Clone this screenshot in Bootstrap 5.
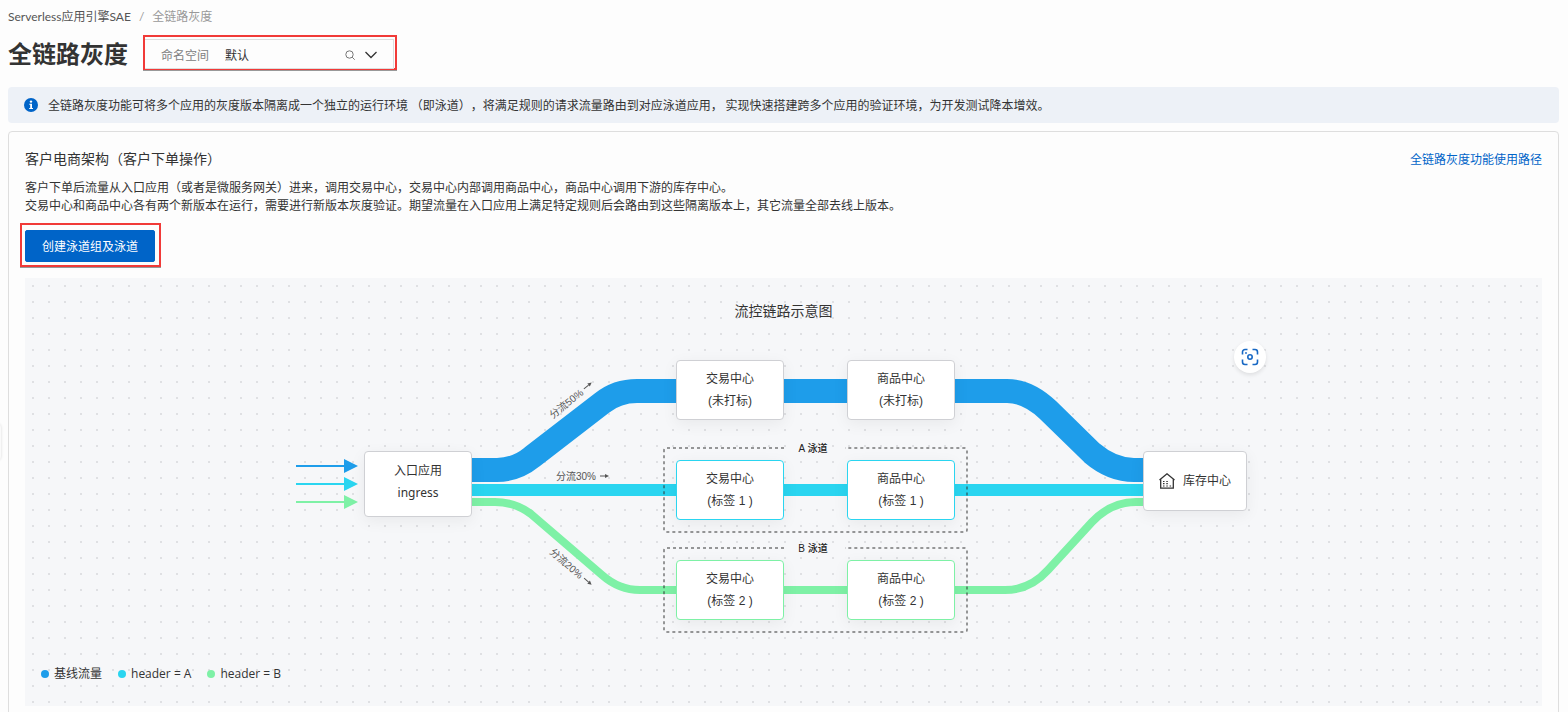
<!DOCTYPE html>
<html lang="zh-CN">
<head>
<meta charset="utf-8">
<meta name="viewport" content="width=device-width, initial-scale=1">
<title>全链路灰度</title>
<link href="https://cdn.jsdelivr.net/npm/bootstrap@5.3.0/dist/css/bootstrap.min.css" rel="stylesheet">
<style>
  :root { --baseline: #1e9dea; --lane-a: #2ad5f0; --lane-b: #7ef1a6; --brand: #0064c8; --hint: #f13a38; }
  body { font-family: "Noto Sans CJK SC", sans-serif; font-size: 12px; line-height: 18px; color: #333; background: #fdfdfd; }
  .page { padding: 8px 9px 8px 8px; }
  .breadcrumb { --bs-breadcrumb-divider-color: #999; --bs-breadcrumb-item-active-color: #999; --bs-breadcrumb-item-padding-x: 8px; font-family: Lato, "Noto Sans CJK SC", sans-serif; font-size: 12px; margin-bottom: 9px; }
  .breadcrumb a { color: #555; text-decoration: none; }
  .page-title { font-size: 24px; line-height: 34px; font-weight: 700; }
  .hint-box { border: 2px solid var(--hint); box-shadow: 0 1px 0 #999; }
  .ns-box { width: 254px; height: 35px; padding: 2px 1px 0 0; margin-left: 15px; }
  .ns-field { border: 1px solid #ddd; border-left: 0; padding: 1px 15px 0 16px; height: 30px; }
  .ns-field label { color: #808080; }
  .ns-field select { appearance: none; border: 0; background: transparent; color: #333; padding: 0; font-size: 12px; min-width: 0; }
  .ns-field svg, .notice svg { flex: none; }
  .notice { background: #edf1f7; border-radius: 4px; padding: 9px 16px; margin-top: 17px; gap: 10px; text-spacing-trim: space-all; }
  .panel { border: 1px solid #dedede; border-radius: 4px; padding: 16px; margin-top: 8px; }
  .panel-title { font-size: 14px; line-height: 20px; margin-bottom: 10px; }
  .panel a { color: var(--brand); text-decoration: none; line-height: 22px; }
  .create-box { padding: 5px 4px 3px 3px; margin: 9px 0 11px -5px; }
  .btn-create { --bs-btn-bg: var(--brand); --bs-btn-border-color: var(--brand); --bs-btn-color: #fff; --bs-btn-hover-bg: #0057ad; --bs-btn-hover-color: #fff; --bs-btn-font-size: 12px; --bs-btn-line-height: 18px; --bs-btn-padding-x: 16px; --bs-btn-padding-y: 6px; --bs-btn-border-radius: 2px; }
  .flow-canvas { background: #f6f7f9 conic-gradient(from 90deg at 14px 14px, #dfe0e3 90deg, transparent 0) -7px -7px / 16px 16px; padding: 22px 0 21px; }
  .flow-title { font-size: 14px; line-height: 20px; margin-bottom: 20px; }
  .flow-stage { position: relative; width: 975px; height: 300px; margin: 0 auto; }
  .flow-stage > svg { position: absolute; inset: 0; }
  .flow-node { position: absolute; width: 108px; height: 60px; padding-top: 7px; text-align: center; line-height: 22px; background: #fff; border: 1px solid #cfd0d4; border-radius: 4px; box-shadow: 0 4px 16px rgba(0,0,0,.06); font-family: "Liberation Sans", "Noto Sans CJK SC", sans-serif; }
  .flow-node.in-a { border-color: var(--lane-a); }
  .flow-node.in-b { border-color: var(--lane-b); }
  .n-entry { left: 68px; top: 111px; height: 66px; padding-top: 8px; font-family: "Noto Sans", "Noto Sans CJK SC", sans-serif; }
  .n-stock { left: 847px; top: 111px; width: 104px; padding: 0; }
  .col-trade { left: 380px; }
  .col-goods { left: 551px; }
  .row-base { top: 20px; }
  .row-a { top: 120px; }
  .row-b { top: 220px; }
  .btn-scan { position: absolute; left: 938px; top: 1px; width: 32px; height: 32px; border: 0; border-radius: 50%; background: #fff; box-shadow: 0 2px 4px rgba(0,0,0,.1); padding: 0; }
  .svg-label { font: 10px "Liberation Sans", "Noto Sans CJK SC", sans-serif; fill: #555; }
  .lane-label { font: 500 10px "Liberation Sans", "Noto Sans CJK SC", sans-serif; fill: #222; text-anchor: middle; }
  .legend-row { padding-left: 16px; margin-top: 23px; line-height: 22px; gap: 16px; }
  .legend-row li { display: flex; align-items: center; gap: 5px; font-family: "Open Sans", "Noto Sans CJK SC", sans-serif; }
  .legend-dot { width: 8px; height: 8px; border-radius: 50%; }
  .side-handle { position: fixed; left: -7px; top: 424px; width: 8px; height: 36px; background: #fafafa; border-radius: 4px; box-shadow: 0 0 3px rgba(0,0,0,.15); }
</style>
</head>
<body>
<div class="side-handle"></div>
<main class="page">
  <nav aria-label="breadcrumb">
    <ol class="breadcrumb">
      <li class="breadcrumb-item"><a href="#">Serverless应用引擎SAE</a></li>
      <li class="breadcrumb-item active" aria-current="page">全链路灰度</li>
    </ol>
  </nav>

  <header class="d-flex align-items-center">
    <h1 class="page-title mb-0">全链路灰度</h1>
    <div class="hint-box ns-box">
      <div class="ns-field d-flex align-items-center">
        <label for="ns" class="me-3">命名空间</label>
        <select id="ns" class="flex-grow-1"><option>默认</option></select>
        <svg width="12" height="12" viewBox="0 0 12 12" fill="none" stroke="#777" class="me-2"><circle cx="5.5" cy="5.5" r="3.7"/><path d="M8.2 8.2 10.7 10.7"/></svg>
        <svg width="14" height="12" viewBox="0 0 14 12" fill="none" stroke="#333" stroke-width="1.3"><path d="M1.500 3 7 8.500 12.500 3"/></svg>
      </div>
    </div>
  </header>

  <div class="notice d-flex align-items-center" role="status">
    <svg width="14" height="14" viewBox="0 0 14 14"><circle cx="7" cy="7" r="7" fill="#0064c8"/><circle cx="7" cy="3.600" r="1.200" fill="#fff"/><path d="M5.300 5.800H8V10h1v1H5.200v-1h1V6.800h-.9z" fill="#fff"/></svg>
    <span>全链路灰度功能可将多个应用的灰度版本隔离成一个独立的运行环境 （即泳道），将满足规则的请求流量路由到对应泳道应用， 实现快速搭建跨多个应用的验证环境，为开发测试降本增效。</span>
  </div>

  <section class="panel">
    <div class="d-flex justify-content-between">
      <h2 class="panel-title fw-normal">客户电商架构（客户下单操作）</h2>
      <a href="#">全链路灰度功能使用路径</a>
    </div>
    <p class="mb-0">客户下单后流量从入口应用（或者是微服务网关）进来，调用交易中心，交易中心内部调用商品中心，商品中心调用下游的库存中心。<br>交易中心和商品中心各有两个新版本在运行，需要进行新版本灰度验证。期望流量在入口应用上满足特定规则后会路由到这些隔离版本上，其它流量全部去线上版本。</p>
    <div class="d-flex"><div class="hint-box create-box"><button type="button" class="btn btn-create d-block">创建泳道组及泳道</button></div></div>

    <div class="flow-canvas overflow-auto">
      <h3 class="flow-title fw-normal text-center">流控链路示意图</h3>
      <div class="flow-stage">
        <svg width="975" height="300" viewBox="296 340 975 300" fill="none">
          <!-- incoming arrows -->
          <g stroke-width="2">
            <path d="M296 466H345" stroke="#1e9dea"/><path d="M344 459 358 466 344 473z" fill="#1e9dea"/>
            <path d="M296 484H345" stroke="#2ad5f0"/><path d="M344 477 358 484 344 491z" fill="#2ad5f0"/>
            <path d="M296 502H345" stroke="#7ef1a6"/><path d="M344 495 358 502 344 509z" fill="#7ef1a6"/>
          </g>
          <!-- traffic bands -->
          <path stroke="#1e9dea" stroke-width="24" d="M470 470H497Q516 470 532 457L602 403Q617 391 637 391H1007Q1028 391 1048 410L1092 453Q1112 470 1134 470H1146"/>
          <path stroke="#2ad5f0" stroke-width="12" d="M470 490H1146"/>
          <path stroke="#7ef1a6" stroke-width="8" d="M470 502H495Q515 502 531 514L602 575Q619 590 640 590H1005Q1030 590 1048 570L1092 522Q1111 502 1136 502H1146"/>
          <!-- lane frames, open at the top for their names -->
          <g stroke="#333" stroke-opacity=".65" stroke-width="1.500" stroke-dasharray="3 3">
            <path d="M784 448H666Q664 448 664 450V530Q664 532 666 532H965Q967 532 967 530V450Q967 448 965 448H845"/>
            <path d="M784 548H666Q664 548 664 550V630Q664 632 666 632H965Q967 632 967 630V550Q967 548 965 548H845"/>
          </g>
          <text class="lane-label" x="813" y="452">A 泳道</text>
          <text class="lane-label" x="813" y="552">B 泳道</text>
          <!-- share of traffic on each band -->
          <g transform="translate(553 419) rotate(-39)"><text class="svg-label">分流50%</text><path d="M43-4h6" stroke="#555"/><path d="M49-6 53-4 49-2z" fill="#555"/></g>
          <g transform="translate(556 480)"><text class="svg-label">分流30%</text><path d="M44-4h6" stroke="#555"/><path d="M49-6 53-4 49-2z" fill="#555"/></g>
          <g transform="translate(549 553) rotate(41)"><text class="svg-label">分流20%</text><path d="M43-4h6" stroke="#555"/><path d="M49-6 53-4 49-2z" fill="#555"/></g>
        </svg>

        <div class="flow-node n-entry">入口应用<br>ingress</div>
        <div class="flow-node col-trade row-base">交易中心<br>(未打标)</div>
        <div class="flow-node col-goods row-base">商品中心<br>(未打标)</div>
        <div class="flow-node col-trade row-a in-a">交易中心<br>(标签 1 )</div>
        <div class="flow-node col-goods row-a in-a">商品中心<br>(标签 1 )</div>
        <div class="flow-node col-trade row-b in-b">交易中心<br>(标签 2 )</div>
        <div class="flow-node col-goods row-b in-b">商品中心<br>(标签 2 )</div>
        <div class="flow-node n-stock d-flex align-items-center justify-content-center gap-2">
          <svg width="16" height="16" viewBox="0 0 16 16" fill="none" stroke="#333" stroke-width="1.300"><path d="M.5 7 8 .8 15.500 7M1.700 6.200V15.200H14.300V6.200"/><path d="M4 8.500h1.500M4 10.700h1.500M4 13h1.500M7.300 10.700h1.500M7.300 13h1.500M10.600 13h1.500M7.300 8.500h1.500" stroke-width="1.200"/></svg>
          <span>库存中心</span>
        </div>
        <button type="button" class="btn-scan d-flex align-items-center justify-content-center" aria-label="截图">
          <svg width="18" height="18" viewBox="0 0 18 18" fill="none" stroke="#1768c4" stroke-width="1.600"><path d="M1.500 6.500V4A2.500 2.500 0 0 1 4 1.500H6.500M11.500 1.500H14A2.500 2.500 0 0 1 16.500 4V6.500M16.500 11.500V14A2.500 2.500 0 0 1 14 16.500H11.500M6.500 16.500H4A2.500 2.500 0 0 1 1.500 14V11.500"/><circle cx="9" cy="9" r="2.200"/><circle cx="5" cy="5" r=".9" fill="#1768c4" stroke="none"/></svg>
        </button>
      </div>
      <ul class="legend-row list-unstyled d-flex mb-0">
        <li><span class="legend-dot" style="background:var(--baseline)"></span>基线流量</li>
        <li><span class="legend-dot" style="background:var(--lane-a)"></span>header = A</li>
        <li><span class="legend-dot" style="background:var(--lane-b)"></span>header = B</li>
      </ul>
    </div>
  </section>
</main>
<script src="https://cdn.jsdelivr.net/npm/bootstrap@5.3.0/dist/js/bootstrap.bundle.min.js"></script>
</body>
</html>
